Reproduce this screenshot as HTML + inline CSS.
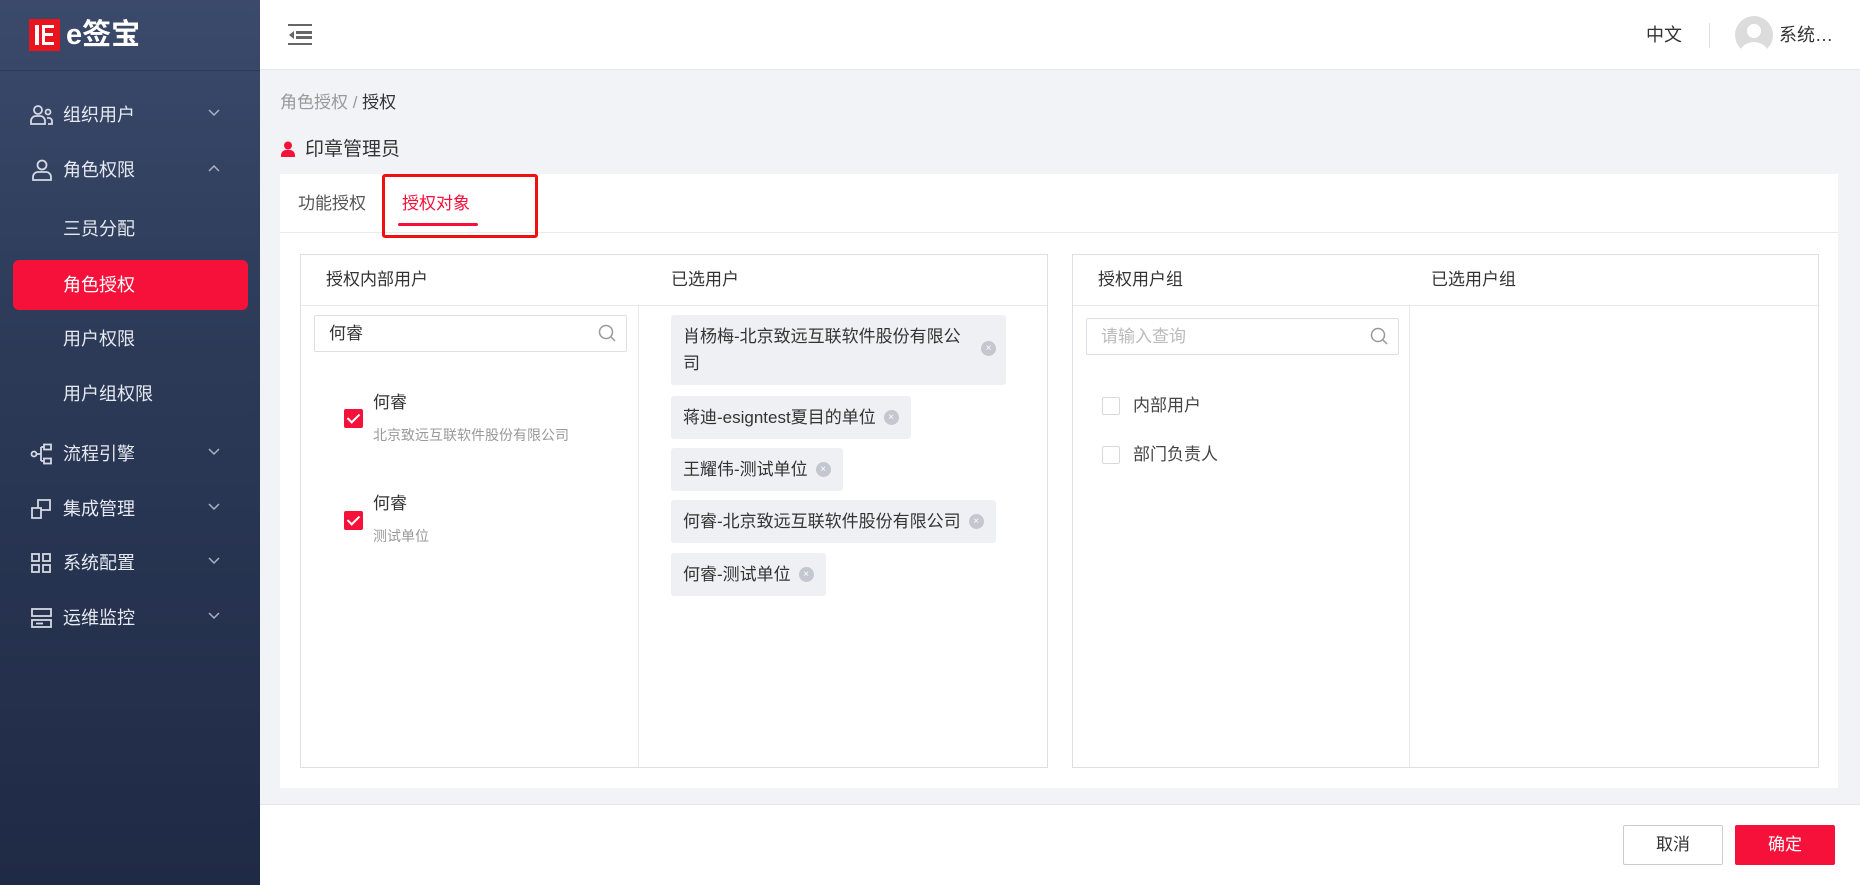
<!DOCTYPE html>
<html><head><meta charset="utf-8"><style>
*{margin:0;padding:0;box-sizing:border-box}
body{width:1860px;height:885px;overflow:hidden;font-family:"Liberation Sans","Noto Sans CJK SC",sans-serif;background:#f2f3f7;position:relative;color:#333}
.a{position:absolute}
.side{left:0;top:0;width:260px;height:885px;background:linear-gradient(180deg,#3b4a6b 0%,#2c3a58 40%,#1f2a45 100%)}
.mi{position:absolute;left:63px;font-size:18px;color:#e6e9f0;line-height:24px;transform:translateY(-12px)}
.ic{position:absolute;left:30px;transform:translateY(-11px)}
.chev{position:absolute;left:208px;transform:translateY(-6px)}
.t{position:absolute;line-height:24px;transform:translateY(-12px);white-space:nowrap}
.tag{position:absolute;left:671px;background:#eef0f4;border-radius:3px;font-size:17px;color:#333;padding:0 12px;line-height:43px;white-space:nowrap}
.x{display:inline-block;width:15px;height:15px;border-radius:50%;background:#c4c7cf;color:#fff;font-size:10px;line-height:15px;text-align:center;vertical-align:middle;margin-left:8px;position:relative;top:-1px}
.cb{position:absolute;width:19px;height:19px;border-radius:2px;background:#f5113a}
.cb:after{content:"";position:absolute;left:6px;top:2px;width:5px;height:10px;border:solid #fff;border-width:0 2px 2px 0;transform:rotate(45deg)}
.ecb{position:absolute;width:18px;height:18px;border:1px solid #d6d9e0;border-radius:2px;background:#fff}
</style></head><body>
<div class="a side"></div>
<div class="a" style="left:29px;top:19px;width:31px;height:32px;background:#e8141e"></div>
<div class="a" style="left:35px;top:25px;width:4px;height:20px;background:#fff"></div>
<div class="a" style="left:42px;top:25px;width:12px;height:20px;border:3px solid #fff;border-right:none"></div>
<div class="a" style="left:42px;top:33px;width:11px;height:3px;background:#fff"></div>
<div class="a" style="left:66px;top:15px;font-size:29px;font-weight:bold;color:#fff;line-height:40px">e签宝</div>
<div class="a" style="left:0;top:70px;width:260px;height:1px;background:#2e3b57"></div>

<svg class="ic" style="top:115px" width="24" height="22" viewBox="0 0 24 22" fill="none" stroke="#d5d9e2" stroke-width="1.8"><circle cx="8" cy="6" r="4"/><path d="M1 20v-3a5 5 0 0 1 5-5h4a5 5 0 0 1 5 5v3z"/><circle cx="18" cy="8" r="2.5"/><path d="M17 14h2a3 3 0 0 1 3 3v3h-4"/></svg>
<div class="mi" style="top:115px">组织用户</div>
<svg class="chev" style="top:115px" width="12" height="8" viewBox="0 0 12 8" fill="none" stroke="#aab2c3" stroke-width="1.5"><path d="M1 1l5 5 5-5"/></svg>
<svg class="ic" style="top:170px" width="24" height="22" viewBox="0 0 24 22" fill="none" stroke="#d5d9e2" stroke-width="1.8"><circle cx="12" cy="6" r="4.5"/><path d="M3 21v-3a5 5 0 0 1 5-5h8a5 5 0 0 1 5 5v3z"/></svg>
<div class="mi" style="top:170px">角色权限</div>
<svg class="chev" style="top:170px" width="12" height="8" viewBox="0 0 12 8" fill="none" stroke="#aab2c3" stroke-width="1.5"><path d="M1 7l5-5 5 5"/></svg>
<div class="mi" style="top:229px">三员分配</div>
<div class="a" style="left:13px;top:260px;width:235px;height:50px;background:#f5113a;border-radius:6px"></div>
<div class="mi" style="top:285px;color:#fff">角色授权</div>
<div class="mi" style="top:339px">用户权限</div>
<div class="mi" style="top:394px">用户组权限</div>
<svg class="ic" style="top:454px" width="24" height="22" viewBox="0 0 24 22" fill="none" stroke="#d5d9e2" stroke-width="1.8"><circle cx="4" cy="11" r="2.5"/><path d="M7 11h4M11 4v14M11 4h3M11 18h3"/><rect x="14" y="1.5" width="7" height="5"/><rect x="14" y="15.5" width="7" height="5"/></svg>
<div class="mi" style="top:454px">流程引擎</div>
<svg class="chev" style="top:454px" width="12" height="8" viewBox="0 0 12 8" fill="none" stroke="#aab2c3" stroke-width="1.5"><path d="M1 1l5 5 5-5"/></svg>
<svg class="ic" style="top:509px" width="24" height="22" viewBox="0 0 24 22" fill="none" stroke="#d5d9e2" stroke-width="1.8"><path d="M2 10h9v10H2zM8 10V2h12v10h-9"/></svg>
<div class="mi" style="top:509px">集成管理</div>
<svg class="chev" style="top:509px" width="12" height="8" viewBox="0 0 12 8" fill="none" stroke="#aab2c3" stroke-width="1.5"><path d="M1 1l5 5 5-5"/></svg>
<svg class="ic" style="top:563px" width="24" height="22" viewBox="0 0 24 22" fill="none" stroke="#d5d9e2" stroke-width="1.8"><rect x="2" y="2" width="7" height="7"/><rect x="13" y="2" width="7" height="7"/><rect x="2" y="13" width="7" height="7"/><rect x="13" y="13" width="7" height="7"/></svg>
<div class="mi" style="top:563px">系统配置</div>
<svg class="chev" style="top:563px" width="12" height="8" viewBox="0 0 12 8" fill="none" stroke="#aab2c3" stroke-width="1.5"><path d="M1 1l5 5 5-5"/></svg>
<svg class="ic" style="top:618px" width="24" height="22" viewBox="0 0 24 22" fill="none" stroke="#d5d9e2" stroke-width="1.8"><rect x="2" y="2" width="19" height="7"/><rect x="2" y="13" width="19" height="7"/><path d="M6 16.5h7"/></svg>
<div class="mi" style="top:618px">运维监控</div>
<svg class="chev" style="top:618px" width="12" height="8" viewBox="0 0 12 8" fill="none" stroke="#aab2c3" stroke-width="1.5"><path d="M1 1l5 5 5-5"/></svg>

<div class="a" style="left:260px;top:0;width:1600px;height:70px;background:#fff;border-bottom:1px solid #e4e6eb"></div>
<svg class="a" style="left:288px;top:24px" width="25" height="22" viewBox="0 0 25 22" fill="#666"><rect x="0" y="0" width="24" height="2"/><rect x="8" y="7" width="16" height="3"/><rect x="8" y="12" width="16" height="3"/><rect x="0" y="19" width="24" height="2"/><path d="M1 11l5-4v8z"/></svg>
<div class="t" style="left:1646px;top:35px;font-size:18px;color:#333">中文</div>
<div class="a" style="left:1709px;top:23px;width:1px;height:25px;background:#ddd"></div>
<svg class="a" style="left:1735px;top:16px" width="38" height="38" viewBox="0 0 38 38"><circle cx="19" cy="19" r="19" fill="#dcdcdc"/><circle cx="19" cy="15" r="7" fill="#fff"/><path d="M6 33a14 11 0 0 1 26 0a19 19 0 0 1-26 0z" fill="#fff"/></svg>
<div class="t" style="left:1779px;top:35px;font-size:18px;color:#333">系统…</div>

<div class="t" style="left:280px;top:103px;font-size:17px;color:#999">角色授权 / <span style="color:#333">授权</span></div>
<svg class="a" style="left:281px;top:141px" width="14" height="16" viewBox="0 0 14 16" fill="#f5113a"><circle cx="7" cy="4.5" r="4"/><path d="M0 16v-2a5 5 0 0 1 5-5h4a5 5 0 0 1 5 5v2z"/></svg>
<div class="t" style="left:305px;top:150px;font-size:19px;color:#333">印章管理员</div>

<div class="a" style="left:280px;top:174px;width:1558px;height:614px;background:#fff"></div>
<div class="a" style="left:280px;top:232px;width:1558px;height:1px;background:#e8eaee"></div>
<div class="t" style="left:298px;top:204px;font-size:17px;color:#555">功能授权</div>
<div class="t" style="left:402px;top:204px;font-size:17px;color:#f5113a">授权对象</div>
<div class="a" style="left:398px;top:223px;width:80px;height:3px;border-radius:2px;background:#f5113a"></div>
<div class="a" style="left:382px;top:174px;width:156px;height:64px;border:3px solid #f01010;border-radius:3px"></div>

<div class="a" style="left:300px;top:254px;width:748px;height:514px;border:1px solid #dcdfe6"></div>
<div class="a" style="left:301px;top:305px;width:746px;height:1px;background:#e8eaee"></div>
<div class="a" style="left:638px;top:306px;width:1px;height:461px;background:#e8eaee"></div>
<div class="t" style="left:326px;top:280px;font-size:17px">授权内部用户</div>
<div class="t" style="left:671px;top:280px;font-size:17px">已选用户</div>
<div class="a" style="left:314px;top:315px;width:313px;height:37px;border:1px solid #dcdfe6;border-radius:2px"></div>
<div class="t" style="left:329px;top:334px;font-size:17px">何睿</div>
<svg class="a" style="left:598px;top:324px" width="18" height="18" viewBox="0 0 18 18" fill="none" stroke="#999" stroke-width="1.5"><circle cx="8" cy="8" r="6.5"/><path d="M13 13l4 4"/></svg>
<div class="cb" style="left:344px;top:409px"></div>
<div class="t" style="left:373px;top:403px;font-size:17px">何睿</div>
<div class="t" style="left:373px;top:435px;font-size:14px;color:#999">北京致远互联软件股份有限公司</div>
<div class="cb" style="left:344px;top:511px"></div>
<div class="t" style="left:373px;top:504px;font-size:17px">何睿</div>
<div class="t" style="left:373px;top:536px;font-size:14px;color:#999">测试单位</div>

<div class="tag" style="top:315px;width:335px;height:70px;line-height:27px;padding-top:8px;white-space:normal;padding-right:40px">肖杨梅-北京致远互联软件股份有限公司<span class="x" style="position:absolute;right:10px;top:26px">×</span></div>
<div class="tag" style="top:396px">蒋迪-esigntest夏目的单位<span class="x">×</span></div>
<div class="tag" style="top:448px">王耀伟-测试单位<span class="x">×</span></div>
<div class="tag" style="top:500px">何睿-北京致远互联软件股份有限公司<span class="x">×</span></div>
<div class="tag" style="top:553px">何睿-测试单位<span class="x">×</span></div>

<div class="a" style="left:1072px;top:254px;width:747px;height:514px;border:1px solid #dcdfe6"></div>
<div class="a" style="left:1073px;top:305px;width:745px;height:1px;background:#e8eaee"></div>
<div class="a" style="left:1409px;top:306px;width:1px;height:461px;background:#e8eaee"></div>
<div class="t" style="left:1098px;top:280px;font-size:17px">授权用户组</div>
<div class="t" style="left:1431px;top:280px;font-size:17px">已选用户组</div>
<div class="a" style="left:1086px;top:318px;width:313px;height:37px;border:1px solid #dcdfe6;border-radius:2px"></div>
<div class="t" style="left:1101px;top:337px;font-size:17px;color:#bbb">请输入查询</div>
<svg class="a" style="left:1370px;top:327px" width="18" height="18" viewBox="0 0 18 18" fill="none" stroke="#999" stroke-width="1.5"><circle cx="8" cy="8" r="6.5"/><path d="M13 13l4 4"/></svg>
<div class="ecb" style="left:1102px;top:397px"></div>
<div class="t" style="left:1133px;top:406px;font-size:17px;color:#444">内部用户</div>
<div class="ecb" style="left:1102px;top:446px"></div>
<div class="t" style="left:1133px;top:455px;font-size:17px;color:#444">部门负责人</div>

<div class="a" style="left:260px;top:804px;width:1600px;height:81px;background:#fff;border-top:1px solid #e4e6eb"></div>
<div class="a" style="left:1623px;top:825px;width:100px;height:40px;border:1px solid #ccc;border-radius:2px;background:#fff;font-size:17px;text-align:center;line-height:38px">取消</div>
<div class="a" style="left:1735px;top:825px;width:100px;height:40px;border-radius:2px;background:#f5113a;color:#fff;font-size:17px;text-align:center;line-height:40px">确定</div>
</body></html>
